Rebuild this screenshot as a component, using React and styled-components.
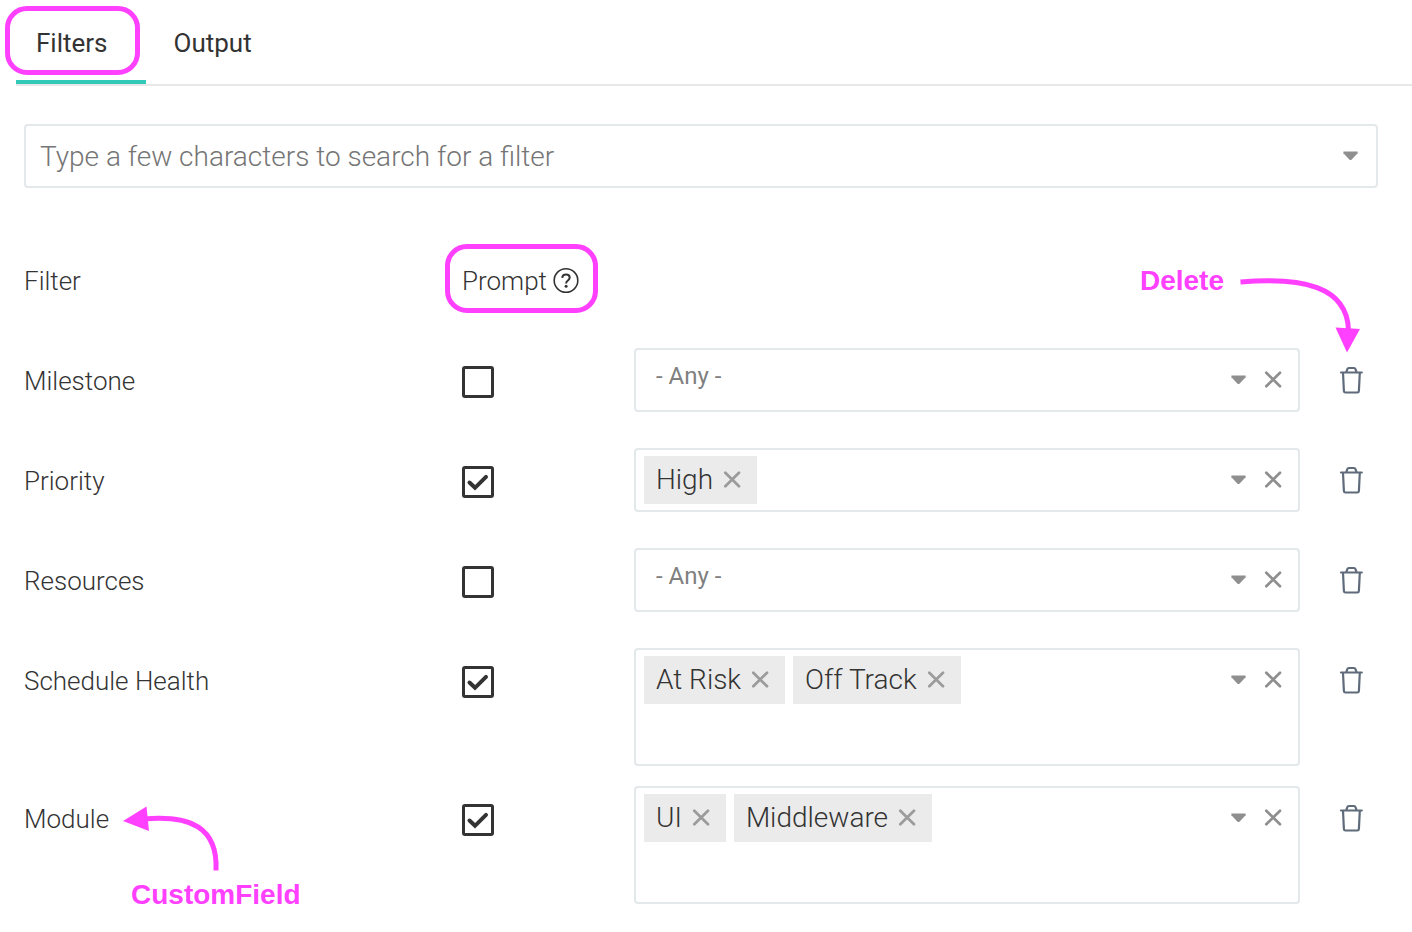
import React, { useState } from "react";
import styled, { createGlobalStyle } from "styled-components";

const ink = "#333333";
const muted = "#8f8f8f";
const line = "#e3e8eb";
const pink = "#ff40ff";

const GlobalStyle = createGlobalStyle`
  *, *::before, *::after { box-sizing: border-box; }
  body {
    margin: 0;
    background: #ffffff;
    color: ${ink};
    font-family: Roboto, "Liberation Sans", sans-serif;
    font-size: 26px;
    font-weight: 300;
  }
  button, input { font: inherit; color: inherit; }
`;

const Page = styled.main`
  overflow-x: hidden;
`;

const Tabs = styled.nav`
  display: flex;
  gap: 8px;
  height: 86px;
  margin-left: 16px;
  border-bottom: 2px solid #e8e8e8;
`;

const Tab = styled.button`
  position: relative;
  padding: 6px 38px 0 20px;
  border: 0;
  border-bottom: 4px solid ${(p) => (p.$active ? "#33c9b9" : "transparent")};
  background: none;
  font-weight: 400;
  cursor: pointer;
`;

const Ring = styled.span`
  position: absolute;
  top: ${(p) => p.$top}px;
  left: ${(p) => p.$left}px;
  right: ${(p) => p.$right}px;
  height: 69px;
  border: 5px solid ${pink};
  border-radius: 22px;
  pointer-events: none;
`;

const Panel = styled.section`
  padding: 38px 34px 28px 24px;
`;

const Box = styled.div`
  display: flex;
  align-items: flex-start;
  border: 2px solid ${line};
  border-radius: 4px;
  background: #ffffff;
`;

const SearchBox = styled(Box)`
  margin-bottom: 60px;
  padding-right: 8px;
`;

const SearchInput = styled.input`
  flex: 1;
  min-width: 0;
  height: 60px;
  padding: 0 14px;
  border: 0;
  outline: 0;
  background: none;
  font-size: 28px;
  &::placeholder { color: #757575; opacity: 1; }
`;

const Row = styled.div`
  position: relative;
  display: grid;
  grid-template-columns: 438px 172px minmax(0, 1fr) 78px;
  align-items: start;
  min-height: 100px;
  padding-bottom: 20px;
`;

const Label = styled.label`
  line-height: 66px;
`;

const Heading = styled.span`
  position: relative;
  display: flex;
  align-items: center;
  justify-self: start;
  gap: 5px;
  line-height: 66px;
`;

const Check = styled.span`
  display: grid;
  width: 32px;
  height: 32px;
  margin-top: 18px;
  > * { grid-area: 1 / 1; }
  svg { pointer-events: none; visibility: hidden; }
  input:checked + svg { visibility: visible; }
`;

const CheckInput = styled.input`
  appearance: none;
  width: 32px;
  height: 32px;
  margin: 0;
  border: 3px solid ${ink};
  border-radius: 3px;
  background: #ffffff;
`;

const Values = styled.div`
  flex: 1;
  min-width: 0;
  display: flex;
  flex-wrap: wrap;
  gap: 6px 8px;
  padding: 6px 8px;
`;

const Chip = styled.span`
  display: flex;
  align-items: center;
  height: 48px;
  padding: 0 6px 0 12px;
  background: #ebebeb;
  font-size: 28px;
  line-height: 50px;
`;

const ValueInput = styled.input`
  flex: 1 1 320px;
  min-width: 0;
  height: 48px;
  padding: 0 12px 8px;
  border: 0;
  outline: 0;
  background: none;
  font-size: 24px;
  font-weight: 400;
  &::placeholder { color: #808080; opacity: 1; }
`;

const Actions = styled.div`
  display: flex;
  padding-right: 8px;
`;

const IconButton = styled.button`
  display: flex;
  align-items: center;
  justify-content: center;
  width: ${(p) => p.$width || 34}px;
  height: ${(p) => p.$height || 60}px;
  padding: 0;
  border: 0;
  background: none;
  color: ${(p) => p.$color || muted};
  cursor: pointer;
`;

const TrashButton = styled(IconButton)`
  justify-self: end;
`;

const Note = styled.span`
  position: absolute;
  top: ${(p) => p.$top}px;
  color: ${pink};
  font: bold 28px/32px "Liberation Sans", Arial, sans-serif;
  pointer-events: none;
`;

const DeleteNote = styled(Note)`right: 154px;`;
const FieldNote = styled(Note)`left: 107px;`;

const Arrow = styled.svg`
  position: absolute;
  z-index: 1;
  pointer-events: none;
`;

const DeleteArrow = styled(Arrow)`
  top: 26px;
  right: 14px;
`;

const FieldArrow = styled(Arrow)`
  top: 14px;
  left: 96px;
`;

const Caret = () => (
  <svg width="16" height="10" viewBox="0 0 16 10" aria-hidden="true">
    <path d="M.4 .6h14.2v1.6L8.7 8.4Q7.5 9.600 6.300 8.400L.4 2.200Z" fill="currentColor" />
  </svg>
);

const Cross = () => (
  <svg width="18" height="18" viewBox="0 0 18 18" aria-hidden="true">
    <path d="M2.300 1.700 16 15.300M16 1.700 2.300 15.300" stroke="currentColor" strokeWidth="2.700" strokeLinecap="round" />
  </svg>
);

const Trash = () => (
  <svg width="24" height="28" viewBox="0 0 24 28" fill="none" stroke="currentColor" strokeWidth="2.200" strokeLinejoin="round" strokeLinecap="round" aria-hidden="true">
    <path d="M2 6.500H22.800M7.300 6 8.200 3.400Q8.600 2 10 2h4.800q1.400 0 1.800 1.400L17.500 6M4 6.800 4.900 25q.1 1.500 1.600 1.500h11.800q1.500 0 1.600-1.500L20.800 6.800" />
  </svg>
);

const Help = () => (
  <svg width="28" height="28" viewBox="0 0 28 28" fill="none" stroke="currentColor" aria-hidden="true">
    <circle cx="14" cy="13.5" r="11.8" strokeWidth="1.6" />
    <path d="M10.2 10.8q.3-3.4 3.8-3.4 3.7 0 3.7 3.1 0 1.5-1.8 3-1.8 1.3-1.8 2.9" strokeWidth="2" />
    <circle cx="14.1" cy="19.2" r="1.5" fill="currentColor" stroke="none" />
  </svg>
);

const initialFilters = [
  { name: "Milestone", prompt: false, values: [] },
  { name: "Priority", prompt: true, values: ["High"] },
  { name: "Resources", prompt: false, values: [] },
  { name: "Schedule Health", prompt: true, values: ["At Risk", "Off Track"] },
  { name: "Module", prompt: true, values: ["UI", "Middleware"], custom: true },
];

function FilterRow({ filter, onChange, onDelete }) {
  const id = filter.name.toLowerCase().replace(" ", "-");
  return (
    <Row>
      <Label htmlFor={id}>{filter.name}</Label>
      <Check>
        <CheckInput
          type="checkbox"
          aria-label={`Prompt for ${filter.name}`}
          checked={filter.prompt}
          onChange={(e) => onChange({ ...filter, prompt: e.target.checked })}
        />
        <svg width="32" height="32" viewBox="0 0 32 32" fill="none" aria-hidden="true">
          <path d="M7.5 16.500 13 21.800 24 10.800" stroke={ink} strokeWidth="4" strokeLinecap="round" />
        </svg>
      </Check>
      <Box>
        <Values>
          {filter.values.map((value) => (
            <Chip key={value}>
              {value}
              <IconButton
                $width={38}
                $height={48}
                $color="#9b9b9b"
                aria-label={`Remove ${value}`}
                onClick={() => onChange({ ...filter, values: filter.values.filter((v) => v !== value) })}
              >
                <Cross />
              </IconButton>
            </Chip>
          ))}
          <ValueInput id={id} placeholder={filter.values.length ? "" : "- Any -"} />
        </Values>
        <Actions>
          <IconButton aria-label={`Show ${filter.name} options`}><Caret /></IconButton>
          <IconButton aria-label={`Clear ${filter.name}`} onClick={() => onChange({ ...filter, values: [] })}>
            <Cross />
          </IconButton>
        </Actions>
      </Box>
      <TrashButton $width={54} $height={64} $color="#5f6b7a" aria-label={`Delete ${filter.name}`} onClick={onDelete}>
        <Trash />
      </TrashButton>
      {filter.custom && (
        <>
          <FieldArrow width="106" height="76" viewBox="0 0 106 76" aria-hidden="true">
            <path d="M24 19C70 15 98 27 96 70.5" fill="none" stroke={pink} strokeWidth="5" />
            <path d="M3 21 26.5 6.5 29 31Z" fill={pink} />
          </FieldArrow>
          <FieldNote $top={93}>CustomField</FieldNote>
        </>
      )}
    </Row>
  );
}

export default function App() {
  const [tab, setTab] = useState("Filters");
  const [filters, setFilters] = useState(initialFilters);
  return (
    <Page>
      <GlobalStyle />
      <Tabs>
        <Tab $active={tab === "Filters"} onClick={() => setTab("Filters")}>
          Filters
          <Ring $top={6} $left={-11} $right={6} />
        </Tab>
        <Tab $active={tab === "Output"} onClick={() => setTab("Output")}>Output</Tab>
      </Tabs>
      <Panel>
        <SearchBox>
          <SearchInput aria-label="Search for a filter" placeholder="Type a few characters to search for a filter" />
          <IconButton aria-label="Show filters"><Caret /></IconButton>
        </SearchBox>
        <Row>
          <Heading>Filter</Heading>
          <Heading>
            Prompt
            <Help />
            <Ring $top={-4} $left={-17} $right={-18} />
          </Heading>
          <DeleteNote $top={17}>Delete</DeleteNote>
          <DeleteArrow width="128" height="80" viewBox="0 0 128 80" aria-hidden="true">
            <path d="M4.5 8C66 3 111 12 112.5 56" fill="none" stroke={pink} strokeWidth="5" />
            <path d="M99.5 53.5 124 55 111 78.5Z" fill={pink} />
          </DeleteArrow>
        </Row>
        {filters.map((filter) => (
          <FilterRow
            key={filter.name}
            filter={filter}
            onChange={(next) => setFilters(filters.map((f) => (f === filter ? next : f)))}
            onDelete={() => setFilters(filters.filter((f) => f !== filter))}
          />
        ))}
      </Panel>
    </Page>
  );
}
